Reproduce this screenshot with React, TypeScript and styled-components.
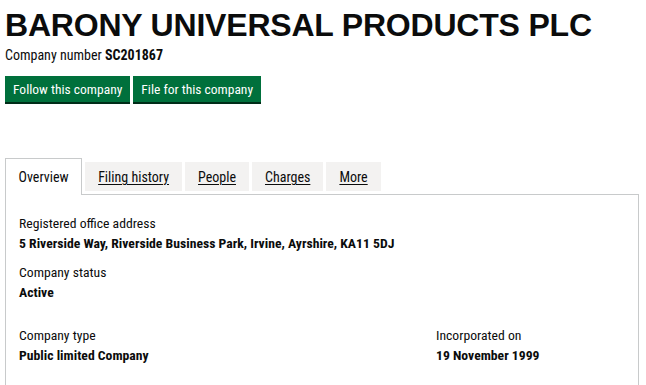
import React from "react";
import styled, { createGlobalStyle } from "styled-components";

const Global = createGlobalStyle`
  html, body { margin: 0; padding: 0; background: #ffffff; }
  body { color: #0b0c0c; font-family: "Roboto Condensed", "Liberation Sans Narrow", "Liberation Sans", sans-serif; }
  * { box-sizing: border-box; }
`;

const Page = styled.main`
  padding: 7px 8px 0 5px;
`;

const Title = styled.h1`
  margin: 0;
  font-family: "Liberation Sans", Arial, sans-serif;
  font-weight: 700;
  font-size: 32px;
  line-height: 36px;
  letter-spacing: -0.2px;
  color: #0b0c0c;
  white-space: nowrap;
`;

const Meta = styled.p`
  margin: 3px 0 0;
  font-size: 14px;
  line-height: 19px;
  strong { font-weight: 700; }
`;

const Actions = styled.div`
  display: flex;
  gap: 3px;
  margin-top: 11px;
`;

const Button = styled.button`
  font-family: inherit;
  font-size: 13.5px;
  line-height: 17px;
  color: #ffffff;
  background: #00703c;
  border: 0;
  padding: 4px 8px;
  height: 26px;
  margin: 0 0 2px;
  box-shadow: 0 2px 0 #002d18;
  border-radius: 0;
  cursor: pointer;
`;

const Tabs = styled.div`
  margin-top: 54px;
`;

const TabList = styled.ul`
  display: flex;
  align-items: flex-start;
  list-style: none;
  margin: 0;
  padding: 0;
  height: 36px;
`;

const Tab = styled.li<{ $selected?: boolean }>`
  position: relative;
  margin-right: 3px;
  font-size: 14px;
  white-space: nowrap;
  ${(p) =>
    p.$selected
      ? `
    height: 37px;
    padding: 0 12.5px;
    background: #ffffff;
    border: 1px solid #c8cacb;
    border-bottom: 0;
    line-height: 36px;
    z-index: 1;
  `
      : `
    margin-top: 4px;
    height: 29px;
    padding: 0 13px;
    background: #f3f2f1;
    line-height: 30px;
  `}
`;

const TabLink = styled.a<{ $selected?: boolean }>`
  color: #0b0c0c;
  text-decoration: ${(p) => (p.$selected ? "none" : "underline")};
  text-underline-offset: 2px;
  text-decoration-thickness: 1px;
`;

const Panel = styled.section`
  width: 634px;
  height: 200px;
  border: 1px solid #c8cacb;
  border-bottom: 0;
  padding: 18px 13px 0;
`;

const Item = styled.dl<{ $gap: number }>`
  margin: 0 0 ${(p) => p.$gap}px;
`;

const Label = styled.dt`
  font-size: 13.7px;
  line-height: 20px;
`;

const Value = styled.dd`
  margin: 0;
  font-size: 13.7px;
  line-height: 20px;
  font-weight: 700;
  white-space: nowrap;
`;

const Columns = styled.div`
  display: grid;
  grid-template-columns: 417px 1fr;
`;

export default function App() {
  const tabs = ["Overview", "Filing history", "People", "Charges", "More"];
  return (
    <>
      <Global />
      <Page>
        <Title>BARONY UNIVERSAL PRODUCTS PLC</Title>
        <Meta>
          Company number <strong>SC201867</strong>
        </Meta>
        <Actions>
          <Button>Follow this company</Button>
          <Button>File for this company</Button>
        </Actions>
        <Tabs>
          <TabList>
            {tabs.map((t, i) => (
              <Tab key={t} $selected={i === 0}>
                <TabLink $selected={i === 0} href="#">
                  {t}
                </TabLink>
              </Tab>
            ))}
          </TabList>
          <Panel>
            <Item $gap={9}>
              <Label>Registered office address</Label>
              <Value>5 Riverside Way, Riverside Business Park, Irvine, Ayrshire, KA11 5DJ</Value>
            </Item>
            <Item $gap={23}>
              <Label>Company status</Label>
              <Value>Active</Value>
            </Item>
            <Columns>
              <Item $gap={0}>
                <Label>Company type</Label>
                <Value>Public limited Company</Value>
              </Item>
              <Item $gap={0}>
                <Label>Incorporated on</Label>
                <Value>19 November 1999</Value>
              </Item>
            </Columns>
          </Panel>
        </Tabs>
      </Page>
    </>
  );
}
